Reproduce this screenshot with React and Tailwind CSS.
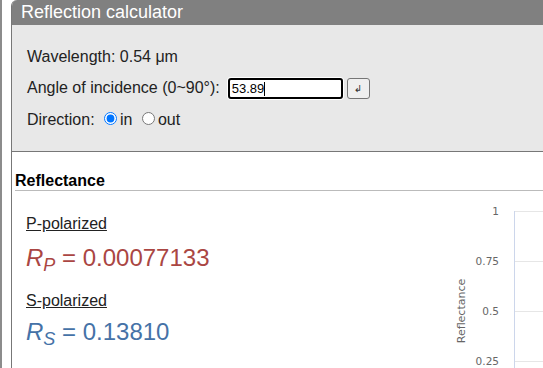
import React from "react";

const ticks = [
  { label: "1", y: 24 },
  { label: "0.75", y: 74 },
  { label: "0.5", y: 124 },
  { label: "0.25", y: 174 },
];

function Chart() {
  return (
    <svg width="93" height="177" viewBox="0 0 93 177" className="shrink-0">
      {[20, 70, 120, 170].map((y) => (
        <line key={y} x1="64.5" x2="93" y1={y + 0.5} y2={y + 0.5} stroke="#e6e6e6" />
      ))}
      <line x1="64.5" x2="64.5" y1="20" y2="177" stroke="#ccd6eb" />
      {ticks.map((t) => (
        <text key={t.label} x="49" y={t.y} textAnchor="end" fill="#666" fontSize="10.5" fontFamily="'DejaVu Sans', sans-serif">
          {t.label}
        </text>
      ))}
      <text transform="translate(14.5 120) rotate(-90)" textAnchor="middle" fill="#666" fontSize="11" fontFamily="'DejaVu Sans', sans-serif">
        Reflectance
      </text>
    </svg>
  );
}

export default function App() {
  return (
    <div className="flex h-[368px] w-[543px] overflow-hidden bg-white font-['Liberation_Sans',Arial,sans-serif] text-[16px] text-[#222]">
      <div className="w-[2px] shrink-0 bg-[#8c8c8c]" />
      <div className="ml-[9px] flex min-w-0 flex-1 flex-col overflow-hidden rounded-tl-[6px] border-l border-[#777]">
        <div className="h-[25px] shrink-0 bg-[#808080] pl-[9px] text-[18px] leading-[25px] text-white">
          Reflection calculator
        </div>

        <div className="shrink-0 border-b border-[#777] bg-[#e8e8e8] pb-[15px] pl-[15px] pt-[16px]">
          <div className="flex h-[31px] items-center">Wavelength: 0.54 μm</div>
          <div className="flex h-[32px] items-center">
            <span>Angle of incidence (0~90°):</span>
            <div className="relative ml-[8px]">
              <input
                type="text"
                readOnly
                value="53.89"
                className="block h-[21px] w-[115px] rounded-[3px] border-2 border-black bg-white px-[2px] font-['Liberation_Sans',Arial,sans-serif] text-[13px] text-black shadow-[0_0_0_1px_#fff] outline-none"
              />
              <span className="absolute left-[36px] top-[4px] h-[14px] w-px bg-black" />
            </div>
            <button
              type="button"
              className="ml-[4px] flex h-[21px] w-[23px] items-center justify-center rounded-[3px] border border-[#767676] bg-[#efefef] font-['DejaVu_Sans',sans-serif] text-[10px] text-[#333]"
            >
              ↲
            </button>
          </div>
          <div className="h-[32px] leading-[32px]">
            Direction:{" "}
            <input type="radio" name="dir" defaultChecked className="ml-[5px] mr-[3px]" />
            in{" "}
            <input type="radio" name="dir" className="ml-[5px] mr-[3px]" />
            out
          </div>
        </div>

        <div className="flex-1">
          <h3 className="ml-[3px] mt-[20px] border-b border-[#bbb] text-[16px] font-bold leading-[18px] text-black">
            Reflectance
          </h3>
          <div className="flex">
            <div className="min-w-0 flex-1 pl-[14px]">
              <div className="mt-[24px] leading-[18px] underline">P-polarized</div>
              <div className="mt-[11px] text-[24px] leading-[28px] text-[#AA4643]">
                <i>R</i>
                <sub className="italic">P</sub> = 0.00077133
              </div>
              <div className="mt-[20px] leading-[18px] underline">S-polarized</div>
              <div className="mt-[8px] text-[24px] leading-[28px] text-[#4572A7]">
                <i>R</i>
                <sub className="italic">S</sub> = 0.13810
              </div>
            </div>
            <Chart />
          </div>
        </div>
      </div>
    </div>
  );
}
